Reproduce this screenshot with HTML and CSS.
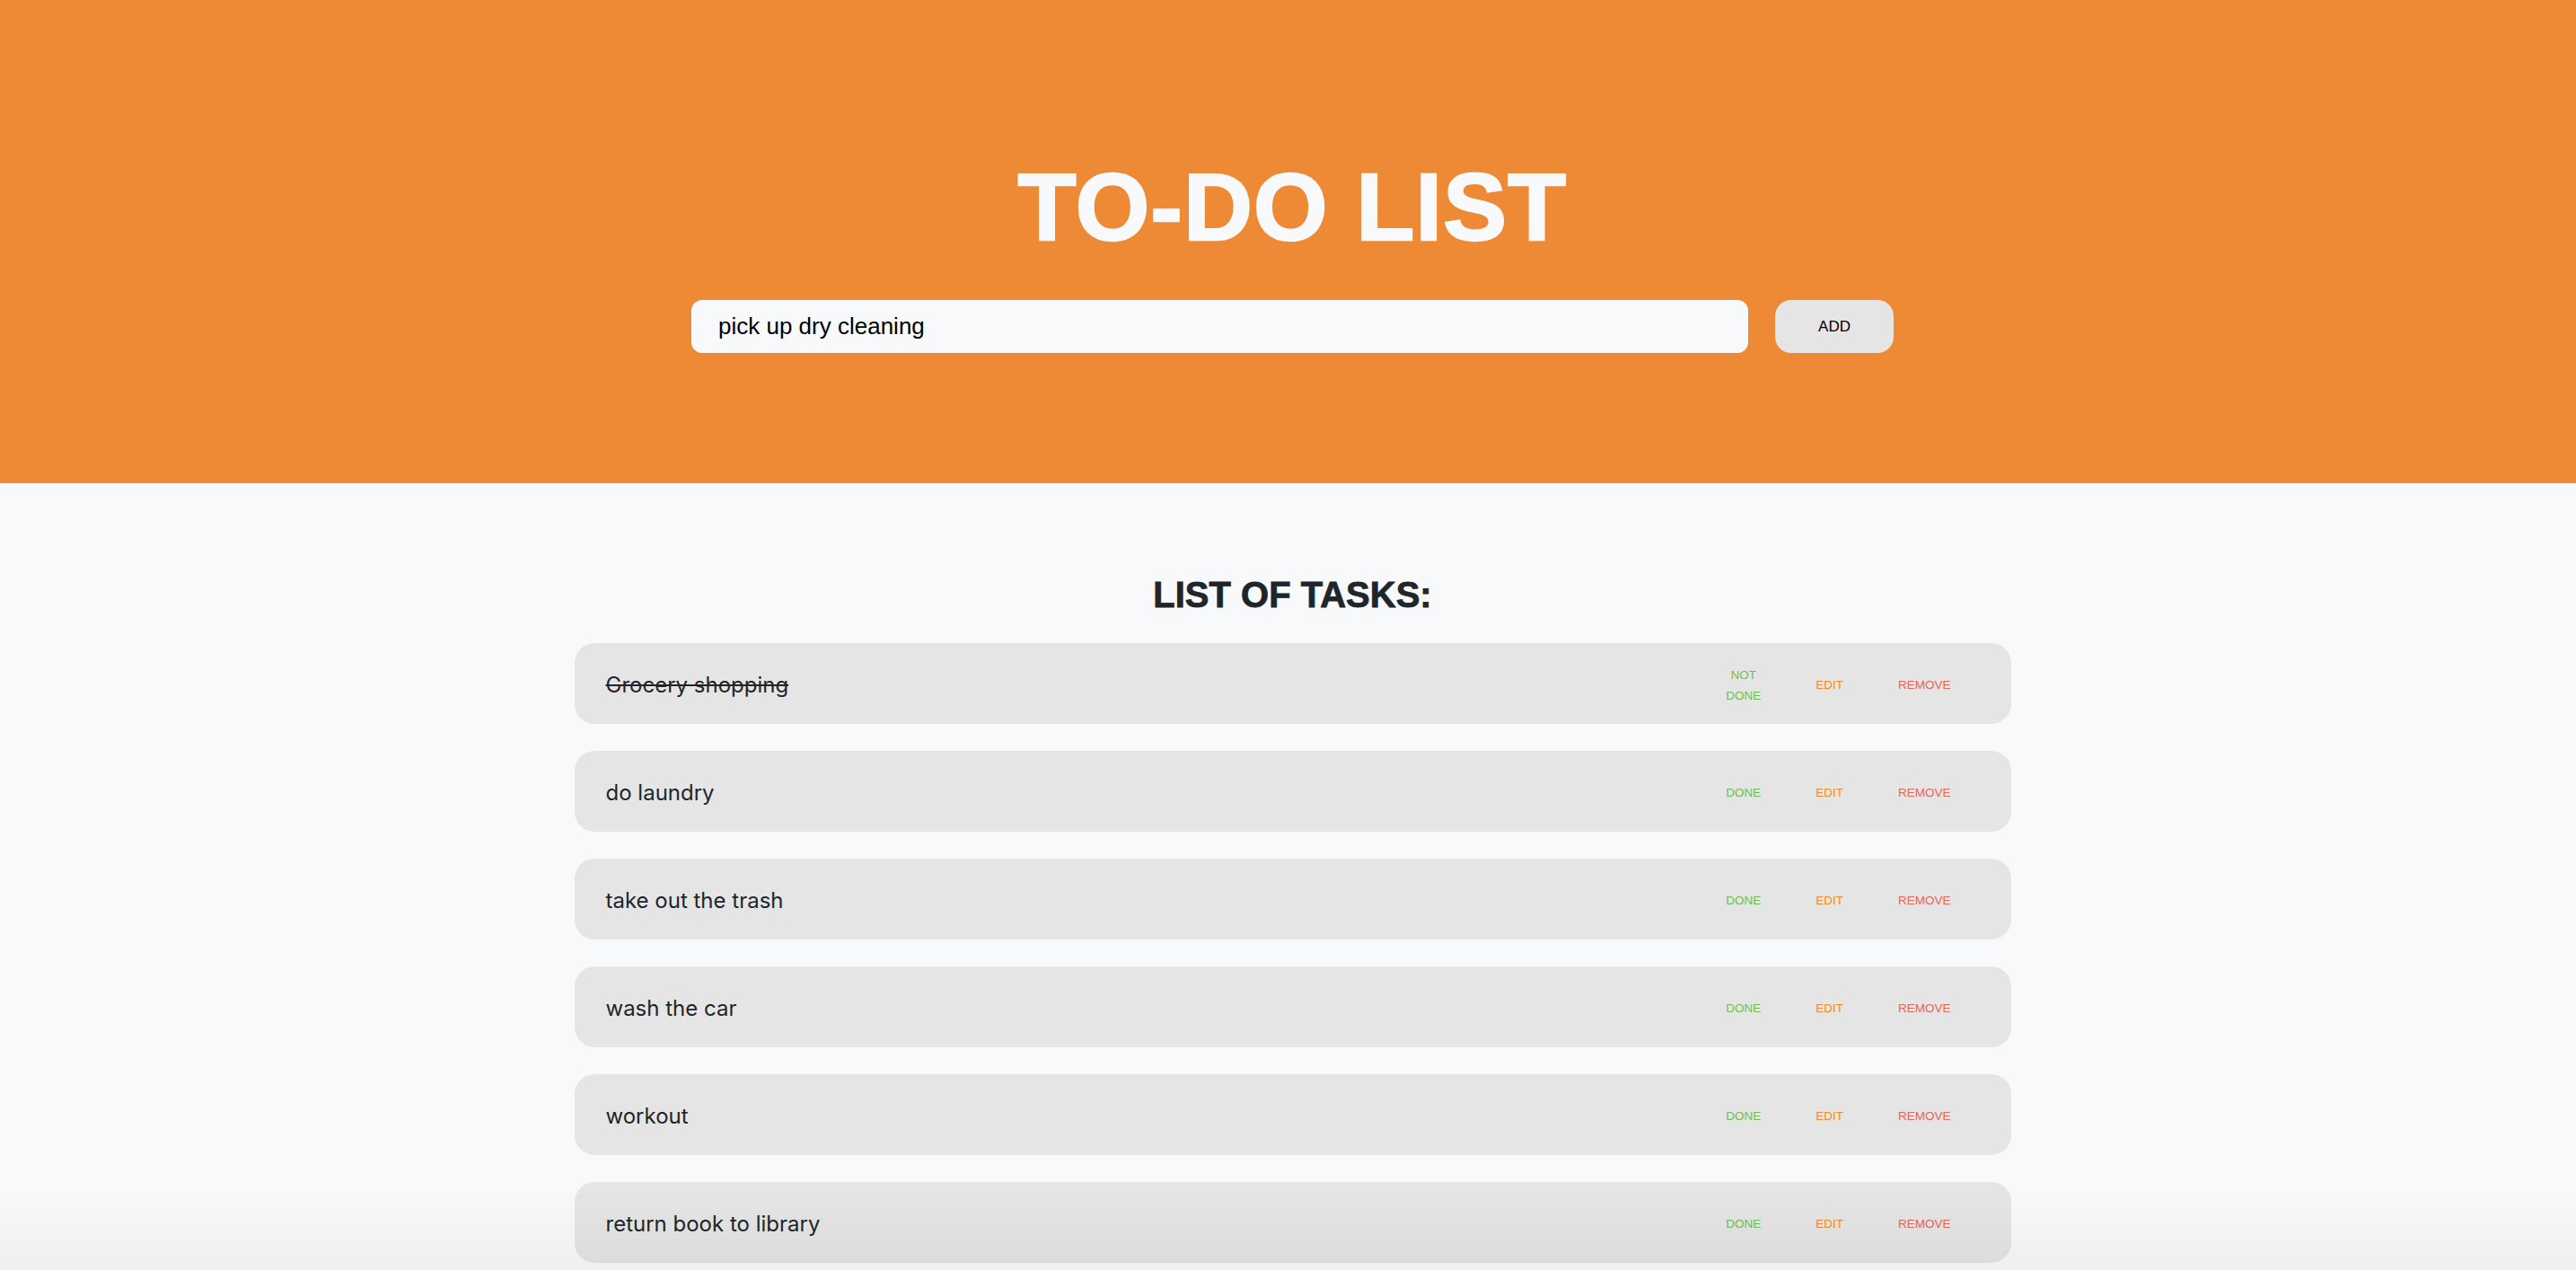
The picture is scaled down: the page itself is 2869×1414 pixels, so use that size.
FILE: index.html
```html
<!DOCTYPE html>
<html lang="en">
<head>
<meta charset="utf-8">
<title>To-Do List</title>
<link rel="stylesheet" href="styles.css">
</head>
<body>
  <header class="hero">
    <h1 class="hero-title">TO-DO LIST</h1>
    <form class="add-form">
      <input class="add-input" type="text" value="pick up dry cleaning">
      <button class="add-btn" type="button">ADD</button>
    </form>
  </header>
  <main class="tasks">
    <h2 class="tasks-title">LIST OF TASKS:</h2>
    <ul class="task-list">
      <li class="task">
        <span class="task-text task-text--done">Grocery shopping</span>
        <div class="task-actions">
          <button class="act act-done" type="button">NOT DONE</button>
          <button class="act act-edit" type="button">EDIT</button>
          <button class="act act-remove" type="button">REMOVE</button>
        </div>
      </li>
      <li class="task">
        <span class="task-text">do laundry</span>
        <div class="task-actions">
          <button class="act act-done" type="button">DONE</button>
          <button class="act act-edit" type="button">EDIT</button>
          <button class="act act-remove" type="button">REMOVE</button>
        </div>
      </li>
      <li class="task">
        <span class="task-text">take out the trash</span>
        <div class="task-actions">
          <button class="act act-done" type="button">DONE</button>
          <button class="act act-edit" type="button">EDIT</button>
          <button class="act act-remove" type="button">REMOVE</button>
        </div>
      </li>
      <li class="task">
        <span class="task-text">wash the car</span>
        <div class="task-actions">
          <button class="act act-done" type="button">DONE</button>
          <button class="act act-edit" type="button">EDIT</button>
          <button class="act act-remove" type="button">REMOVE</button>
        </div>
      </li>
      <li class="task">
        <span class="task-text">workout</span>
        <div class="task-actions">
          <button class="act act-done" type="button">DONE</button>
          <button class="act act-edit" type="button">EDIT</button>
          <button class="act act-remove" type="button">REMOVE</button>
        </div>
      </li>
      <li class="task">
        <span class="task-text">return book to library</span>
        <div class="task-actions">
          <button class="act act-done" type="button">DONE</button>
          <button class="act act-edit" type="button">EDIT</button>
          <button class="act act-remove" type="button">REMOVE</button>
        </div>
      </li>
    </ul>
  </main>
  <div class="bottom-fade"></div>
</body>
</html>
```

FILE: styles.css
```css
* {
  box-sizing: border-box;
}

html, body {
  margin: 0;
  padding: 0;
}

body {
  background: #f8f9fa;
  font-family: "Liberation Sans", Arial, sans-serif;
  color: #212529;
}

.hero {
  background: #ee8a35;
  padding: 177px 0 145px 10px;
  display: flex;
  flex-direction: column;
  align-items: center;
}

.hero-title {
  margin: 0;
  font-family: "Liberation Sans", Arial, sans-serif;
  font-weight: 700;
  font-size: 106px;
  line-height: 1;
  letter-spacing: 1.3px;
  color: #f8f9fa;
  -webkit-text-stroke: 2.5px #f8f9fa;
}

.add-form {
  margin-top: 51px;
  display: flex;
  gap: 30px;
}

.add-input {
  width: 1177px;
  height: 59px;
  border: none;
  border-radius: 12px;
  background: #f8f9fa;
  padding: 0 30px;
  font-family: "Liberation Sans", Arial, sans-serif;
  font-size: 26px;
  color: #000;
  outline: none;
}

.add-btn {
  width: 132px;
  height: 59px;
  border: none;
  border-radius: 18px;
  background: #e5e5e5;
  font-family: "Liberation Sans", Arial, sans-serif;
  font-size: 17px;
  color: #000;
  padding: 0;
}

.tasks {
  padding: 104px 0 60px 10px;
  display: flex;
  flex-direction: column;
  align-items: center;
}

.tasks-title {
  margin: 0;
  font-family: "Liberation Sans", Arial, sans-serif;
  font-weight: 700;
  font-size: 40px;
  line-height: 1;
  color: #212529;
  -webkit-text-stroke: 0.8px #212529;
}

.task-list {
  list-style: none;
  margin: 34px 0 0;
  padding: 0;
  width: 1600px;
  display: flex;
  flex-direction: column;
  gap: 30px;
}

.task {
  height: 90px;
  background: #e5e5e5;
  border-radius: 22px;
  padding: 0 57px 0 35px;
  display: flex;
  align-items: center;
  justify-content: space-between;
}

.task-text {
  padding-top: 2px;
  font-family: Inter, "Noto Sans", sans-serif;
  font-size: 24px;
  color: #212529;
}

.task-text--done {
  text-decoration: line-through;
}

.task-actions {
  padding-top: 3px;
  display: flex;
  align-items: center;
  gap: 41px;
}

.act {
  width: min-content;
  border: none;
  background: transparent;
  padding: 0 10px;
  font-family: "Liberation Sans", Arial, sans-serif;
  font-size: 13.5px;
  line-height: 23px;
  text-align: center;
}

.act-done {
  color: #72bd4a;
}

.act-edit {
  color: #f08a2c;
}

.act-remove {
  color: #e2665a;
}

.bottom-fade {
  position: fixed;
  left: 0;
  right: 0;
  bottom: 0;
  height: 90px;
  background: linear-gradient(to bottom, rgba(0, 0, 0, 0), rgba(0, 0, 0, 0.04));
  pointer-events: none;
}
```
